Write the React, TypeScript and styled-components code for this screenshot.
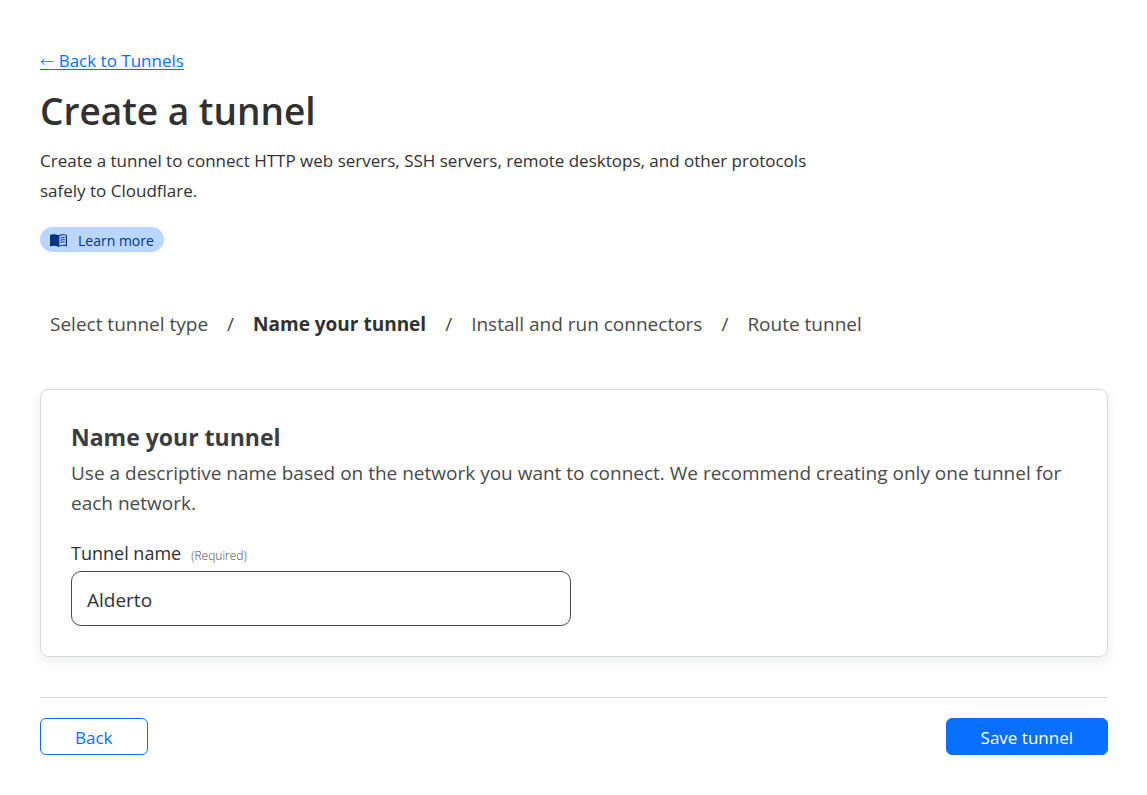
import React, { useState } from "react";
import styled, { createGlobalStyle } from "styled-components";

const GlobalStyle = createGlobalStyle`
  *, *::before, *::after { box-sizing: border-box; }
  body {
    margin: 0;
    background: #fff;
    color: #313131;
    font-family: "Segoe UI", "Open Sans", "Noto Sans", sans-serif;
    font-size: 17px;
    line-height: 30px;
  }
`;

const Page = styled.main`
  padding: 46px 39px 40px 40px;
`;

const BackLink = styled.a`
  display: block;
  width: fit-content;
  color: #086fff;
  text-decoration: underline;
  text-underline-offset: 2px;
`;

const Arrow = styled.span`
  font-family: "DejaVu Sans", sans-serif;
  font-weight: 200;
  line-height: 1;
`;

const Title = styled.h1`
  margin: 8px 0;
  font-size: 37px;
  line-height: 54px;
  font-weight: 600;
`;

const Intro = styled.p`
  margin: 0 0 21px;
  max-width: 800px;
`;

const LearnMore = styled.a`
  display: flex;
  align-items: center;
  gap: 11px;
  width: fit-content;
  height: 25px;
  padding: 1px 10px 0;
  border-radius: 13px;
  background: #b9d6ff;
  color: #003682;
  font-size: 14px;
  line-height: 25px;
  text-decoration: none;
`;

const Steps = styled.ol`
  display: flex;
  margin: 57px 0 50px;
  padding: 0 10px;
  list-style: none;
  font-size: 19px;
`;

const Step = styled.li<{ $current?: boolean }>`
  color: ${(p) => (p.$current ? "#313131" : "#4a4a4a")};
  font-weight: ${(p) => (p.$current ? 700 : 400)};

  &:not(:last-child)::after {
    content: "/";
    margin: 0 19px;
    color: #4a4a4a;
    font-weight: 400;
  }
`;

const Card = styled.section`
  padding: 30px;
  border: 1px solid #d9d9d9;
  border-radius: 8px;
  box-shadow: 0 4px 12px rgba(0, 20, 20, 0.08);
`;

const CardTitle = styled.h2`
  margin: 0 0 4px;
  color: #3c3c3c;
  font-size: 23px;
  line-height: 34px;
  font-weight: 700;
`;

const CardText = styled.p`
  margin: 0 0 20px;
  color: #4a4a4a;
  font-size: 19px;
`;

const Label = styled.label`
  display: flex;
  align-items: baseline;
  gap: 10px;
  font-size: 18px;
`;

const Hint = styled.span`
  color: #4a4a4a;
  font-size: 12px;
  font-weight: 300;
`;

const NameInput = styled.input`
  display: block;
  width: 100%;
  max-width: 500px;
  height: 55px;
  padding: 2px 15px 0;
  border: 1px solid #4a4a4a;
  border-radius: 10px;
  background: #fff;
  color: #313131;
  font: inherit;
  font-size: 19px;
`;

const Footer = styled.footer`
  display: flex;
  justify-content: space-between;
  margin-top: 40px;
  padding-top: 20px;
  border-top: 1px solid #d9d9d9;
`;

const Button = styled.button<{ $primary?: boolean }>`
  height: 37px;
  padding: 2px 34px 0;
  border: 1px solid #086fff;
  border-radius: 6px;
  background: ${(p) => (p.$primary ? "#086fff" : "#fff")};
  color: ${(p) => (p.$primary ? "#fff" : "#086fff")};
  font: inherit;
  cursor: pointer;
`;

const BookIcon = () => (
  <svg width="17" height="13" viewBox="0 0 17 13" aria-hidden="true">
    <path
      d="M0 1C2.600 0 6 0 8.500 1.300C11 0 14.400 0 17 1V12.400C14.400 11.500 11 11.500 8.500 13C6 11.500 2.600 11.500 0 12.400Z"
      fill="#003682"
    />
    <path d="M9.300 2.200C11.300 1.200 13.700 1.100 15.800 1.700V11C13.700 10.500 11.300 10.700 9.300 11.600Z" fill="#b9d6ff" />
    <path
      d="M10.300 4.100C11.700 3.500 13.300 3.300 14.800 3.500M10.300 6.300C11.700 5.700 13.300 5.500 14.800 5.700M10.300 8.500C11.700 7.900 13.300 7.700 14.800 7.900"
      stroke="#003682"
      fill="none"
    />
  </svg>
);

const steps = ["Select tunnel type", "Name your tunnel", "Install and run connectors", "Route tunnel"];

export default function App() {
  const [name, setName] = useState("Alderto");
  return (
    <>
      <GlobalStyle />
      <Page>
        <BackLink href="#tunnels">
          <Arrow>←</Arrow> Back to Tunnels
        </BackLink>
        <Title>Create a tunnel</Title>
        <Intro>
          Create a tunnel to connect HTTP web servers, SSH servers, remote desktops, and other protocols safely to
          Cloudflare.
        </Intro>
        <LearnMore href="#learn-more">
          <BookIcon />
          Learn more
        </LearnMore>
        <Steps>
          {steps.map((step, i) => (
            <Step key={step} $current={i === 1} aria-current={i === 1 ? "step" : undefined}>
              {step}
            </Step>
          ))}
        </Steps>
        <Card>
          <CardTitle>Name your tunnel</CardTitle>
          <CardText>
            Use a descriptive name based on the network you want to connect. We recommend creating only one tunnel for
            each network.
          </CardText>
          <Label htmlFor="tunnel-name">
            Tunnel name <Hint>(Required)</Hint>
          </Label>
          <NameInput id="tunnel-name" type="text" required value={name} onChange={(e) => setName(e.target.value)} />
        </Card>
        <Footer>
          <Button type="button">Back</Button>
          <Button type="button" $primary>
            Save tunnel
          </Button>
        </Footer>
      </Page>
    </>
  );
}
